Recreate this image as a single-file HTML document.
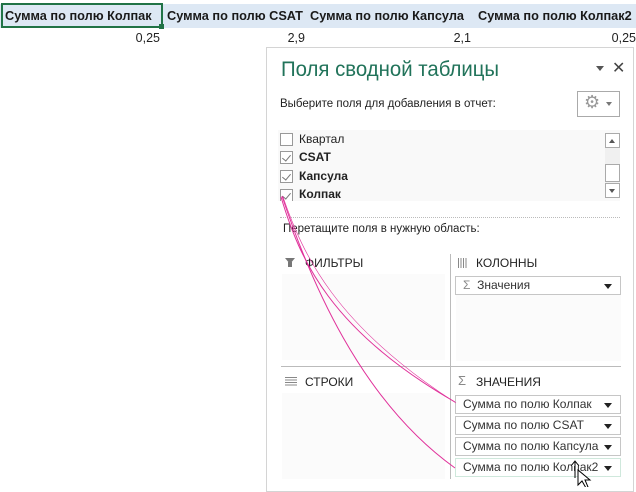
<!DOCTYPE html>
<html><head><meta charset="utf-8"><style>
*{margin:0;padding:0;box-sizing:border-box}
body{width:636px;height:487px;background:#fff;font-family:"Liberation Sans",Arial,sans-serif;position:relative;overflow:hidden;font-size:12px;color:#222}
.a{position:absolute;white-space:nowrap}
.hdr{position:absolute;left:0;top:4px;width:636px;height:24px;background:#dde8f4}
.hc{position:absolute;top:4px;height:24px;line-height:24px;font-weight:bold;font-size:13px;color:#1a1a1a;white-space:nowrap;transform:scaleX(0.98);transform-origin:0 0}
.v{position:absolute;top:31px;font-size:12.5px;text-align:right;width:60px}
.dd{position:absolute;left:455px;width:166px;height:19px;border:1px solid #c6c6c6;background:#fff;font-size:12px;line-height:17px;padding-left:7px;color:#333;white-space:nowrap}
.dd:after{content:"";position:absolute;right:8px;top:7px;border:4px solid transparent;border-top:5px solid #222;border-bottom:0}
.cb{position:absolute;left:280px;width:13px;height:13px;border:1px solid #999;background:#fff}
.ck:after{content:"";position:absolute;left:3px;top:1px;width:4px;height:7px;border:solid #777;border-width:0 1px 1px 0;transform:rotate(40deg)}
.fl{position:absolute;left:299px;font-size:12px}
</style></head><body>
<div class="hdr"></div>
<div style="position:absolute;left:1px;top:3px;width:162px;height:25px;border:2px solid #217346"></div>
<div style="position:absolute;left:159px;top:24px;width:5px;height:5px;background:#217346"></div>
<div class="hc" style="left:5px">Сумма по полю Колпак</div>
<div class="hc" style="left:167px">Сумма по полю CSAT</div>
<div class="hc" style="left:310px">Сумма по полю Капсула</div>
<div class="hc" style="left:478px">Сумма по полю Колпак2</div>
<div class="v" style="left:100px">0,25</div>
<div class="v" style="left:245px">2,9</div>
<div class="v" style="left:411px">2,1</div>
<div class="v" style="left:576px">0,25</div>

<div style="position:absolute;left:266px;top:47px;width:368px;height:445px;border:1px solid #d4d4d4;background:#fff"></div>
<div class="a" style="left:281px;top:58px;font-size:21px;color:#21735a;transform:scaleX(0.97);transform-origin:0 0">Поля сводной таблицы</div>
<div class="a" style="left:596px;top:66px;border:4px solid transparent;border-top:5px solid #555"></div>
<div class="a" style="left:612px;top:58px;font-size:16px;color:#444">✕</div>
<div class="a" style="left:280px;top:98px;font-size:11.5px">Выберите поля для добавления в отчет:</div>
<div style="position:absolute;left:577px;top:91px;width:43px;height:26px;border:1px solid #aaa"></div>
<div class="a" style="left:584px;top:92px;font-size:18px;color:#999">⚙</div>
<div class="a" style="left:606px;top:102px;border:3.5px solid transparent;border-top:4px solid #777"></div>
<div style="position:absolute;left:278px;top:130px;width:342px;height:71px;background:#f9f9f9"></div>
<div style="position:absolute;left:605px;top:133px;width:15px;height:65px;background:#f0f0f0"></div>
<div style="position:absolute;left:605px;top:133px;width:15px;height:15px;border:1px solid #aaa;background:#fff"></div>
<div class="a" style="left:609px;top:139px;border:3.5px solid transparent;border-bottom:4px solid #555;border-top:0"></div>
<div style="position:absolute;left:605px;top:164px;width:15px;height:18px;border:1px solid #aaa;background:#fff"></div>
<div style="position:absolute;left:605px;top:183px;width:15px;height:15px;border:1px solid #aaa;background:#fff"></div>
<div class="a" style="left:609px;top:189px;border:3.5px solid transparent;border-top:4px solid #555;border-bottom:0"></div>
<div class="cb" style="top:133px"></div><div class="fl" style="top:132px">Квартал</div>
<div class="cb ck" style="top:151px"></div><div class="fl" style="top:150px;font-weight:bold">CSAT</div>
<div class="cb ck" style="top:170px"></div><div class="fl" style="top:169px;font-weight:bold">Капсула</div>
<div style="position:absolute;left:278px;top:187px;width:140px;height:14px;overflow:hidden"><div class="cb ck" style="left:2px;top:2px"></div><div class="fl" style="left:21px;top:0px;font-weight:bold">Колпак</div></div>
<div style="position:absolute;left:280px;top:217px;width:340px;border-top:1px dotted #bbb"></div>
<div class="a" style="left:283px;top:223px;font-size:11.5px">Перетащите поля в нужную область:</div>
<div style="position:absolute;left:282px;top:274px;width:163px;height:86px;background:#fbfbfb"></div>
<div style="position:absolute;left:456px;top:295px;width:165px;height:66px;background:#fbfbfb"></div>
<div style="position:absolute;left:282px;top:393px;width:163px;height:86px;background:#fbfbfb"></div>
<div style="position:absolute;left:450px;top:254px;width:1px;height:225px;background:#bbb"></div>
<div style="position:absolute;left:281px;top:366px;width:340px;height:1px;background:#bbb"></div>
<div class="a" style="left:285px;top:258px;border:5px solid transparent;border-top:6px solid #777;border-bottom:0"></div>
<div class="a" style="left:288px;top:262px;width:4px;height:5px;background:#777"></div>
<div class="a" style="left:305px;top:256px">ФИЛЬТРЫ</div>
<div class="a" style="left:458px;top:258px;width:10px;height:10px;background:repeating-linear-gradient(90deg,#888 0 1px,#fff 1px 2.5px)"></div>
<div class="a" style="left:476px;top:256px">КОЛОННЫ</div>
<div class="dd" style="top:276px"><span style="color:#888">Σ</span>&nbsp; Значения</div>
<div class="a" style="left:285px;top:377px;width:12px;height:9px;background:repeating-linear-gradient(180deg,#888 0 1px,#fff 1px 2.5px)"></div>
<div class="a" style="left:305px;top:375px">СТРОКИ</div>
<div class="a" style="left:458px;top:373px;color:#888;font-size:13px">Σ</div>
<div class="a" style="left:476px;top:375px">ЗНАЧЕНИЯ</div>
<div class="dd" style="top:395px">Сумма по полю Колпак</div>
<div class="dd" style="top:416px">Сумма по полю CSAT</div>
<div class="dd" style="top:437px">Сумма по полю Капсула</div>
<div class="dd" style="top:458px;border-color:#cfe8dc">Сумма по полю Колпак2</div>
<svg style="position:absolute;left:0;top:0" width="636" height="487">
<path d="M281 197 C300 260 330 330 455 402" fill="none" stroke="#e0309a" stroke-width="1"/>
<path d="M282 196 C310 280 360 400 455 468" fill="none" stroke="#e0309a" stroke-width="1"/>
<path d="M283 197 C303 255 335 325 456 403" fill="none" stroke="#e0309a" stroke-width="0.6"/>
<path d="M575 462 L575 478 M571 466 L575 461 L579 466 M578 470 L578 485 L582 481 L586 488 L588 487 L585 480 L590 480 Z" fill="#fff" stroke="#000" stroke-width="1"/>
</svg>
</body></html>
